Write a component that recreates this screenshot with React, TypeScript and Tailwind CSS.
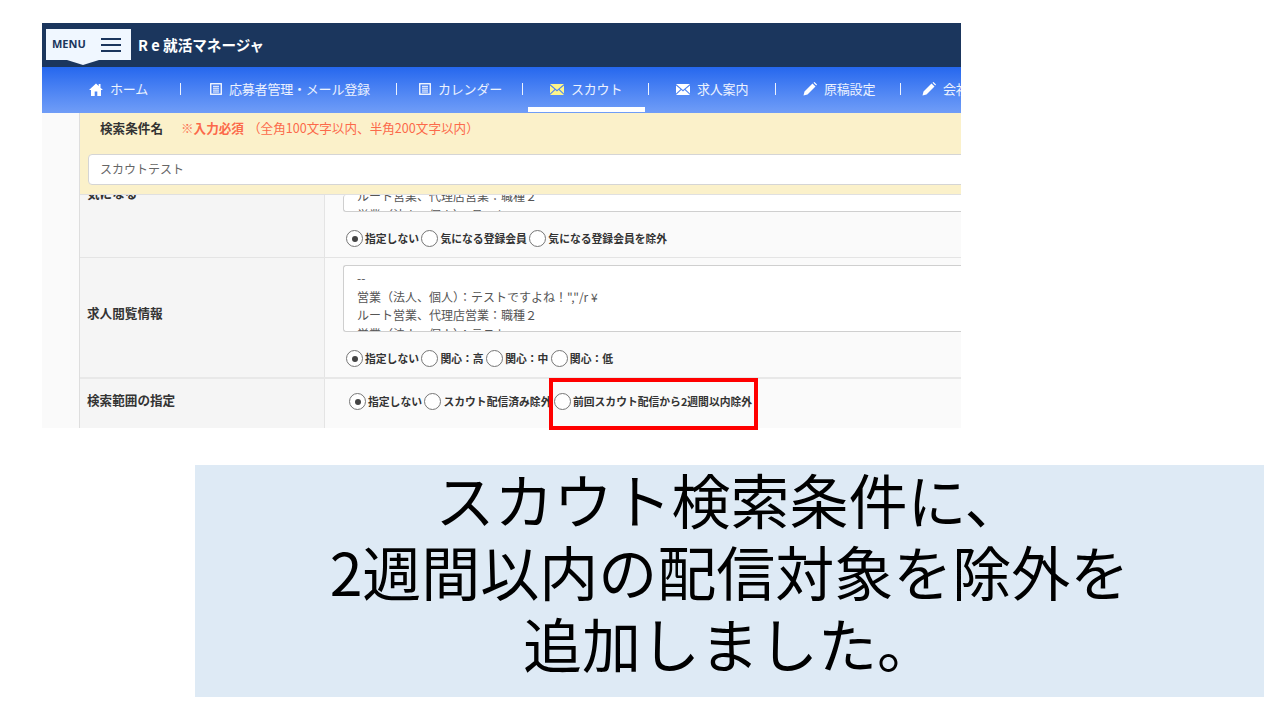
const font = { fontFamily: '"Noto Sans CJK JP", sans-serif' };

function HomeIcon() {
  return (
    <svg width="14" height="13" viewBox="0 0 14 13" className="shrink-0">
      <path d="M7 0.5L0 7h2v6h3.7V8.6h2.6V13H12V7h2L11.5 4.7V1H9.7v2z" fill="white" />
    </svg>
  );
}
function BurgerIcon() {
  return (
    <svg width="20" height="14" viewBox="0 0 20 14" className="shrink-0">
      <path d="M0 1h20M0 7h20M0 13h20" stroke="#1b365d" strokeWidth="1.8" />
    </svg>
  );
}
function ListIcon() {
  return (
    <svg width="12" height="12" viewBox="0 0 12 12" className="shrink-0">
      <rect x="0.75" y="0.75" width="10.5" height="10.5" fill="none" stroke="white" strokeWidth="1.3" />
      <path d="M3 3.3h6M3 5.2h6M3 7.1h6M3 9h6" stroke="white" strokeWidth="1" />
    </svg>
  );
}
function MailIcon({ color = "white" }: { color?: string }) {
  return (
    <svg width="14" height="11" viewBox="0 0 14 11" className="shrink-0">
      <path d="M0 0h14L7 6z M0 1.5V9.5L4.5 5.2z M14 1.5V9.5L9.5 5.2z M0 11L5.3 6 7 7.5 8.7 6 14 11z" fill={color} />
    </svg>
  );
}
function PenIcon() {
  return (
    <svg width="14" height="14" viewBox="0 0 14 14" className="shrink-0">
      <path d="M0.5 13.5L1.5 9.5 9.5 1.5 12.5 4.5 4.5 12.5z M10.5 0.7L11.5 0 14 2.5 13.3 3.5z" fill="white" />
    </svg>
  );
}

function NavItem({ icon, label, w, active }: { icon: React.ReactNode; label: string; w: string; active?: boolean }) {
  return (
    <div className={`relative flex h-full shrink-0 items-center gap-[7px] whitespace-nowrap pb-[2px] ${w}`}>
      {icon}
      <span className="text-[13px] text-white/90 tracking-[-0.2px]">{label}</span>
      {active && <div className="absolute bottom-[1px] left-[-22px] h-[5px] w-[117px] bg-white" />}
    </div>
  );
}
function Sep({ w }: { w: string }) {
  return <div className={`mb-[2px] h-[12px] w-px shrink-0 bg-white/90 ${w}`} />;
}

function Radio({ on }: { on?: boolean }) {
  return (
    <span className="flex h-[17px] w-[17px] shrink-0 items-center justify-center rounded-full border border-[#767676] bg-white">
      {on && <span className="h-[6px] w-[6px] rounded-full bg-[#444]" />}
    </span>
  );
}
function Radios({ items, className = "" }: { items: string[]; className?: string }) {
  return (
    <div className={`flex items-center ${className}`}>
      {items.map((t, i) => (
        <div key={t} className="flex items-center gap-[2px] pr-[2.5px]">
          <Radio on={i === 0} />
          <span className="whitespace-nowrap text-[10.8px] font-bold text-[#333]">{t}</span>
        </div>
      ))}
    </div>
  );
}
function Label({ children }: { children: React.ReactNode }) {
  return <div className="whitespace-nowrap pl-[7px] text-[12.6px] font-bold text-[#333]">{children}</div>;
}
function TextBox({ children, className = "" }: { children: React.ReactNode; className?: string }) {
  return (
    <div className={`ml-[18px] overflow-hidden rounded-l-[3px] border border-r-0 border-[#cfcfcf] bg-white pl-[13px] text-[12px] leading-[18.5px] text-[#555] whitespace-nowrap ${className}`}>
      {children}
    </div>
  );
}

export default function App() {
  return (
    <div className="relative h-[720px] w-[1280px] overflow-hidden bg-white" style={font}>
      {/* embedded screenshot */}
      <div className="absolute left-[42px] top-[23px] flex h-[405px] w-[919px] flex-col overflow-hidden bg-[#fafafa]">
        <div className="flex h-[44px] shrink-0 items-center bg-[#1b365d]">
          <div className="relative ml-[4px] mt-[-1px] flex h-[31px] w-[85px] items-center justify-between bg-[#f0f7ff] pl-[6px] pr-[10px]">
            <span className="text-[11px] font-bold text-[#1b365d]" style={{ fontFamily: '"Open Sans", sans-serif' }}>MENU</span>
            <BurgerIcon />
            <div className="absolute bottom-[-5px] left-[21px] h-0 w-0 border-x-[16px] border-t-[5px] border-x-transparent border-t-[#f0f7ff]" />
          </div>
          <span className="ml-[7px] text-[14.6px] font-bold text-white">R e 就活マネージャ</span>
        </div>
        <div className="flex h-[46px] shrink-0 items-center bg-gradient-to-b from-[#2567ee] to-[#709df7] pl-[47px]">
          <NavItem w="w-[91px]" icon={<HomeIcon />} label="ホーム" />
          <Sep w="mr-[29px]" />
          <NavItem w="w-[186px]" icon={<ListIcon />} label="応募者管理・メール登録" />
          <Sep w="mr-[22px]" />
          <NavItem w="w-[103px]" icon={<ListIcon />} label="カレンダー" />
          <Sep w="mr-[27px]" />
          <NavItem w="w-[98px]" active icon={<MailIcon color="#fdf58a" />} label="スカウト" />
          <Sep w="mr-[27px]" />
          <NavItem w="w-[99px]" icon={<MailIcon />} label="求人案内" />
          <Sep w="mr-[27px]" />
          <NavItem w="w-[97px]" icon={<PenIcon />} label="原稿設定" />
          <Sep w="mr-[21px]" />
          <NavItem w="w-[80px]" icon={<PenIcon />} label="会社情報" />
        </div>
        <div className="flex min-h-0 flex-1">
          <div className="w-[38px] shrink-0 border-r border-[#dedede] bg-[#fafafa]" />
          <div className="flex min-w-0 flex-1 flex-col">
            <div className="h-[82px] shrink-0 overflow-hidden border-b border-[#e0e0e0] bg-[#fbf1ca] pl-[8px]">
              <div className="flex h-[31px] items-center whitespace-nowrap pl-[12px] pb-[1px] text-[12.6px]">
                <span className="font-bold text-[#333]">検索条件名</span>
                <span className="ml-[18px] font-bold text-[#fb6a4a]">※入力必須</span>
                <span className="ml-[4px] text-[#fb6a4a]">（全角100文字以内、半角200文字以内）</span>
              </div>
              <div className="mr-[-10px] mt-[10px] flex h-[31px] items-center rounded-l-[4px] border border-[#d5d5d5] bg-white pb-[2px] pl-[11px] text-[12px] text-[#666]">
                スカウトテスト
              </div>
            </div>
            {/* row 1 */}
            <div className="flex h-[63px] shrink-0 border-b border-[#e4e4e4]">
              <div className="flex w-[245px] shrink-0 items-start overflow-hidden border-r border-[#e4e4e4] bg-[#f5f5f5]">
                <div className="mt-[-11px]"><Label>気になる</Label></div>
              </div>
              <div className="min-w-0 flex-1 overflow-hidden bg-[#fafafa]">
                <TextBox className="h-[17px] border-t-0">
                  <div className="mt-[-8px]">ルート営業、代理店営業：職種２</div>
                  <div>営業（法人、個人）：テスト</div>
                </TextBox>
                <Radios className="ml-[21px] mt-[18px]" items={["指定しない", "気になる登録会員", "気になる登録会員を除外"]} />
              </div>
            </div>
            {/* row 2 */}
            <div className="flex h-[121px] shrink-0 border-b-2 border-[#e8e8e8]">
              <div className="flex w-[245px] shrink-0 items-center border-r border-[#e4e4e4] bg-[#f5f5f5] pb-[8px]">
                <Label>求人閲覧情報</Label>
              </div>
              <div className="min-w-0 flex-1 bg-[#fafafa] pt-[7px]">
                <TextBox className="h-[67px] pt-[3px]">
                  <div>--</div>
                  <div>営業（法人、個人）：テストですよね！","/r ¥</div>
                  <div>ルート営業、代理店営業：職種２</div>
                  <div>営業（法人、個人）：テスト</div>
                </TextBox>
                <Radios className="ml-[21px] mt-[18px]" items={["指定しない", "関心：高", "関心：中", "関心：低"]} />
              </div>
            </div>
            {/* row 3 */}
            <div className="flex min-h-0 flex-1">
              <div className="flex w-[245px] shrink-0 items-start border-r border-[#e4e4e4] bg-[#f5f5f5] pt-[12px]">
                <Label>検索範囲の指定</Label>
              </div>
              <div className="min-w-0 flex-1 bg-[#fafafa] pt-[14px]">
                <Radios className="ml-[24px]" items={["指定しない", "スカウト配信済み除外", "前回スカウト配信から2週間以内除外"]} />
              </div>
            </div>
          </div>
        </div>
      </div>
      {/* red highlight */}
      <div className="absolute left-[549px] top-[378px] h-[52px] w-[209px] border-4 border-[#ff0000]" />
      {/* caption */}
      <div className="absolute left-[195px] top-[465px] flex h-[232px] w-[1069px] flex-col items-center justify-center bg-[#deeaf5] pb-[20px] text-center text-[59px] leading-[72px] text-black">
        <div>スカウト検索条件に、</div>
        <div>2週間以内の配信対象を除外を</div>
        <div>追加しました。</div>
      </div>
    </div>
  );
}
